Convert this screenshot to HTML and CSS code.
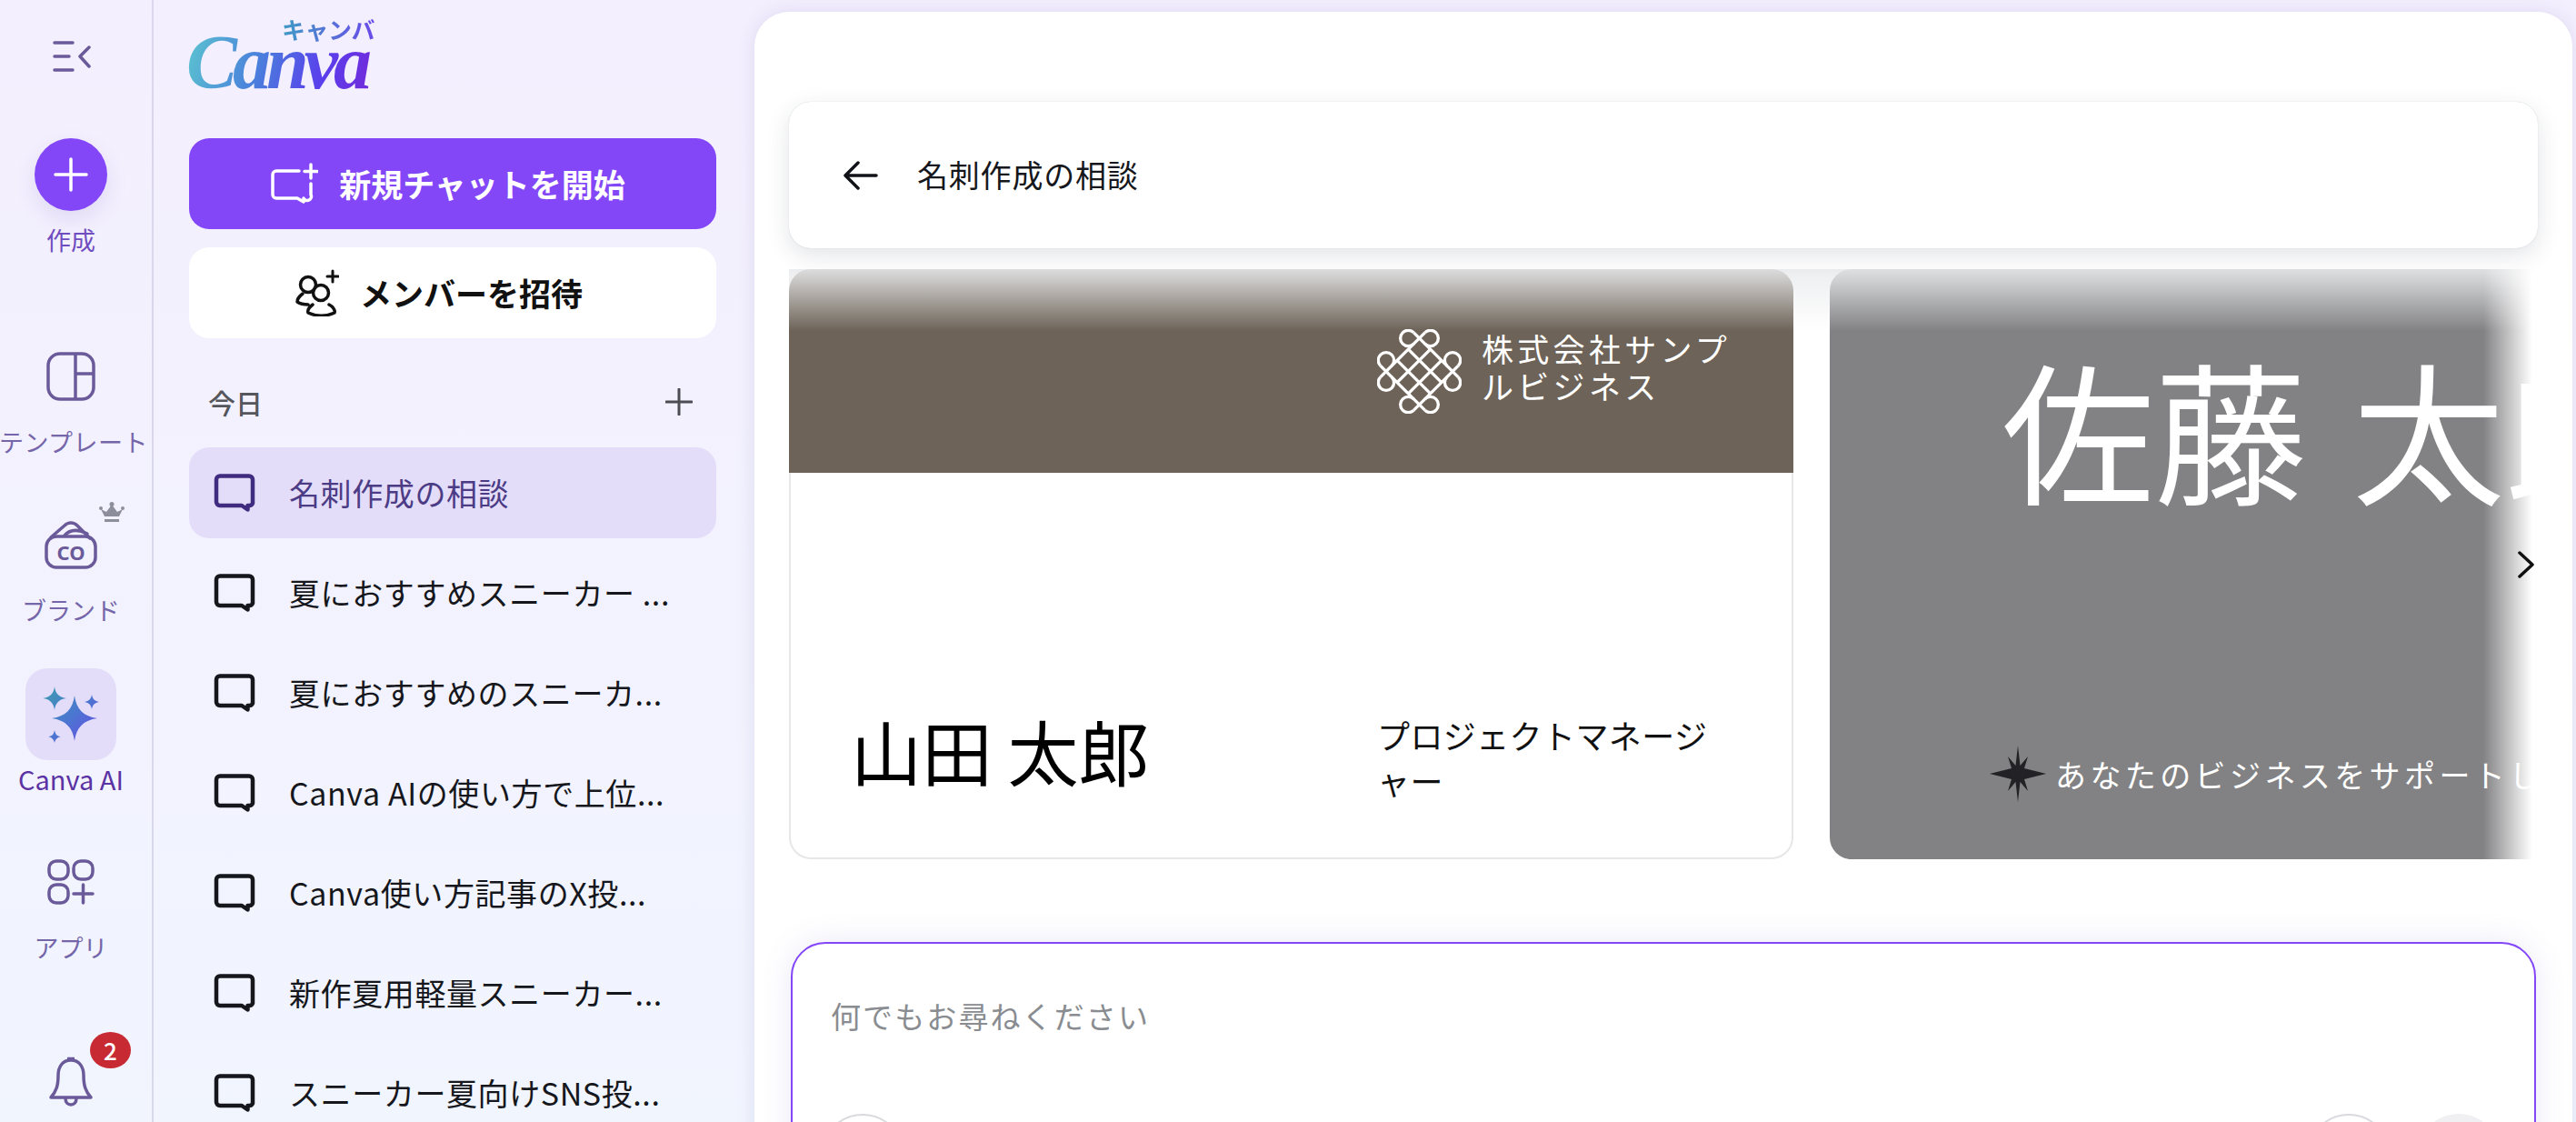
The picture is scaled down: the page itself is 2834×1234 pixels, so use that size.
FILE: index.html
```html
<!DOCTYPE html>
<html lang="ja">
  <head>
    <meta charset="utf-8" />
    <meta name="viewport" content="width=device-width, initial-scale=1" />
    <title>Canva AI</title>
    <link rel="stylesheet" href="styles.css">
  </head>
  <body>
    <svg class="defs" width="0" height="0" aria-hidden="true">
      <defs>
        <symbol id="chat" viewBox="0 0 46 42">
          <path d="M7 2.500h32a4 4 0 0 1 4 4v26a4 4 0 0 1-4 2.500h-1.500v4.500l-6.500-4.500H7a4 4 0 0 1-4-4V6.500a4 4 0 0 1 4-4z" fill="none" stroke="currentColor" stroke-width="4.500" stroke-linejoin="round" />
        </symbol>
        <linearGradient id="sparkle" x1="0" y1="0" x2="1" y2="1">
          <stop offset="0" stop-color="#3f9bb0" />
          <stop offset="0.5" stop-color="#4a78cf" />
          <stop offset="1" stop-color="#6a4ae8" />
        </linearGradient>
      </defs>
    </svg>

    <div class="app">
      <nav class="rail">
        <svg class="rail-toggle" viewBox="0 0 42 34" fill="none" stroke="#6b5a9a" stroke-width="3.500" stroke-linecap="round" stroke-linejoin="round">
          <path d="M2 2h20M2 17h16M2 32h20M40 7 30 17l10 11" />
        </svg>

        <button class="create-btn" type="button">
          <svg viewBox="0 0 40 40" fill="none" stroke="#fff" stroke-width="3.500" stroke-linecap="round"><path d="M20 3v34M3 20h34" /></svg>
        </button>
        <span class="rail-label create-label">作成</span>

        <svg class="rail-icon icon-template" viewBox="0 0 54 54" fill="none" stroke="#6a5a9a" stroke-width="3.500">
          <rect x="2" y="2" width="50" height="50" rx="13" />
          <path d="M32 2v50M32 24h20" />
        </svg>
        <span class="rail-label template-label">テンプレート</span>

        <div class="brand-icon">
          <svg class="rail-icon" viewBox="0 0 58 54" fill="none" stroke="#6a5a9a" stroke-width="3.500" stroke-linecap="round" stroke-linejoin="round">
            <rect x="2" y="18" width="54" height="34" rx="11" />
            <path d="M7 19 22 6c4-4 10-4 14 0l14 14M22 17c6-7 15-7 25-2" />
            <text class="brand-co" x="29" y="44" text-anchor="middle">CO</text>
          </svg>
          <svg class="crown" viewBox="0 0 28 24" fill="#8c8e9b">
            <path d="M6 16 2 8l6 3 6-8 6 8 6-3-4 8z" />
            <circle cx="14" cy="2.500" r="2.500" />
            <circle cx="2" cy="7" r="2" />
            <circle cx="26" cy="7" r="2" />
            <rect x="6" y="19" width="16" height="3" />
          </svg>
        </div>
        <span class="rail-label brand-label">ブランド</span>

        <div class="ai-tile">
          <svg viewBox="0 0 66 62">
            <path fill="url(#sparkle)" d="M15 0c1 8 5 12 13 13-8 1-12 5-13 13-1-8-5-12-13-13 8-1 12-5 13-13zM56 9c1 5 3 7 8 8-5 1-7 3-8 8-1-5-3-7-8-8 5-1 7-3 8-8zM37 10c2 15 10 23 25 25-15 2-23 10-25 25-2-15-10-23-25-25 15-2 23-10 25-25zM15 48c1 5 3 7 7 7-4 1-6 3-7 7-1-4-3-6-7-7 4 0 6-2 7-7z" />
          </svg>
        </div>
        <span class="rail-label ai-label">Canva AI</span>

        <svg class="rail-icon icon-apps" viewBox="0 0 52 50" fill="none" stroke="#6a5a9a" stroke-width="3.500" stroke-linecap="round">
          <rect x="2" y="2" width="21" height="20" rx="8" />
          <rect x="29" y="2" width="21" height="20" rx="8" />
          <rect x="2" y="28" width="21" height="20" rx="8" />
          <path d="M39.500 28v20M29 38h21" />
        </svg>
        <span class="rail-label apps-label">アプリ</span>

        <div class="bell">
          <svg viewBox="0 0 50 56" fill="none" stroke="#6a5a9a" stroke-width="3.500" stroke-linejoin="round">
            <path d="M25 5c-9 0-14 7-14 17 0 11-2 17-8 24h44c-6-7-8-13-8-24 0-10-5-17-14-17z" />
            <path d="M21 3.500h8M19 47c0 5 3 7 6 7s6-2 6-7" />
          </svg>
          <span class="badge">2</span>
        </div>
      </nav>

      <aside class="panel">
        <div class="logo">
          <span class="logo-kana">キャンバ</span>
          <span class="logo-word">Canva</span>
        </div>

        <button class="btn btn-primary" type="button">
          <svg viewBox="0 0 52 46" fill="none" stroke="#fff" stroke-width="3.500" stroke-linecap="round" stroke-linejoin="round">
            <path d="M31 9H6a4 4 0 0 0-4 4v22a4 4 0 0 0 4 4h23l7 4v-4a4 4 0 0 0 8-4V23" />
            <path d="M44 2v15M37 9.500h14" />
          </svg>
          新規チャットを開始
        </button>
        <button class="btn btn-white" type="button">
          <svg viewBox="0 0 48 52" fill="none" stroke="#111" stroke-width="3.500" stroke-linecap="round" stroke-linejoin="round">
            <circle cx="14" cy="17" r="8.500" />
            <circle cx="28" cy="26" r="8.500" />
            <path d="M8 27C4 30 2 33 2 36c3 2 7 3 12 3M19 39c-4 3-6 6-5 9 9 4 20 4 29 0 1-3-2-7-6-9" />
            <path d="M41 2v12M35 8h12" stroke-width="3" />
          </svg>
          メンバーを招待
        </button>

        <div class="section-head">
          <span>今日</span>
          <svg viewBox="0 0 30 30" fill="none" stroke="#4c4d52" stroke-width="3" stroke-linecap="round"><path d="M15 1v28M1 15h28" /></svg>
        </div>

        <ul class="chat-list">
          <li class="chat-item active"><svg class="chat-icon"><use href="#chat" /></svg><span>名刺作成の相談</span></li>
          <li class="chat-item"><svg class="chat-icon"><use href="#chat" /></svg><span>夏におすすめスニーカー ...</span></li>
          <li class="chat-item"><svg class="chat-icon"><use href="#chat" /></svg><span>夏におすすめのスニーカ...</span></li>
          <li class="chat-item"><svg class="chat-icon"><use href="#chat" /></svg><span>Canva AIの使い方で上位...</span></li>
          <li class="chat-item"><svg class="chat-icon"><use href="#chat" /></svg><span>Canva使い方記事のX投...</span></li>
          <li class="chat-item"><svg class="chat-icon"><use href="#chat" /></svg><span>新作夏用軽量スニーカー...</span></li>
          <li class="chat-item"><svg class="chat-icon"><use href="#chat" /></svg><span>スニーカー夏向けSNS投...</span></li>
        </ul>
      </aside>

      <main class="main">
        <header class="topbar">
          <svg viewBox="0 0 38 32" fill="none" stroke="#111318" stroke-width="3.500" stroke-linecap="round" stroke-linejoin="round"><path d="M36 16H3M16 2 2 16l14 14" /></svg>
          <span>名刺作成の相談</span>
        </header>

        <section class="carousel">
          <article class="card card-light">
            <div class="card-band">
              <svg class="knot" viewBox="-140 -140 280 280" fill="none" stroke="#fff" stroke-width="10">
                <path d="M-18.400 -128.400 128.400 18.400M-128.400 -18.400 18.400 128.400M128.400 -18.400 -18.400 128.400M18.400 -128.400 -128.400 18.400" />
                <path d="M-36.500 -73.500 73.500 36.500M-73.500 -36.500 36.500 73.500M73.500 -36.500 -36.500 73.500M36.500 -73.500 -73.500 36.500" />
                <path d="M18.400 -128.400A26 26 0 1 1 18.400 -91.600M-18.400 -128.400A26 26 0 1 0 -18.400 -91.600M18.400 128.400A26 26 0 1 0 18.400 91.600M-18.400 128.400A26 26 0 1 1 -18.400 91.600" />
                <path d="M128.400 -18.400A26 26 0 1 0 91.600 -18.400M128.400 18.400A26 26 0 1 1 91.600 18.400M-128.400 -18.400A26 26 0 1 1 -91.600 -18.400M-128.400 18.400A26 26 0 1 0 -91.600 18.400" />
              </svg>
              <p class="company">株式会社サンプルビジネス</p>
            </div>
            <div class="card-body">
              <p class="person">山田 太郎</p>
              <p class="job">プロジェクトマネージャー</p>
            </div>
          </article>

          <article class="card card-dark">
            <p class="big-name">佐藤 太郎</p>
            <div class="tagline">
              <svg viewBox="0 0 62 62" fill="#222226"><path d="M31 0 33.500 22 42 12 38 25 62 31 38 37 42 50 33.500 40 31 62 28.500 40 20 50 24 37 0 31 24 25 20 12 28.500 22z" /></svg>
              <span>あなたのビジネスをサポートします</span>
            </div>
          </article>

          <div class="fade-top"></div>
          <div class="fade-right"></div>
          <svg class="next" viewBox="0 0 18 30" fill="none" stroke="#111" stroke-width="3.500" stroke-linecap="round" stroke-linejoin="round"><path d="M2 2l14 13L2 28" /></svg>
        </section>

        <section class="composer">
          <p class="placeholder">何でもお尋ねください</p>
          <div class="composer-tools">
            <span class="tool tool-line"></span>
            <span class="tool-gap"></span>
            <span class="tool tool-line"></span>
            <span class="tool tool-fill"></span>
          </div>
        </section>
      </main>
    </div>
  </body>
</html>
```

FILE: styles.css
```css
* {
  box-sizing: border-box;
}
html,
body {
  margin: 0;
  height: 100%;
  overflow: hidden;
}
body {
  font-family: "Noto Sans CJK JP", "Noto Sans", sans-serif;
  color: #15171c;
  background: linear-gradient(180deg, #f4effe 0%, #f1f5fe 100%);
}
p,
ul {
  margin: 0;
  padding: 0;
}
.defs {
  display: block;
  height: 0;
}
.app {
  display: flex;
  height: 1234px;
  overflow: hidden;
}

/* left rail */
.rail {
  width: 169px;
  flex: none;
  border-right: 2px solid #d9d7ec;
  display: flex;
  flex-direction: column;
  align-items: center;
  padding: 45px 11px 0 0;
}
.rail-toggle {
  width: 42px;
  height: 34px;
  margin-left: 2px;
  flex: none;
}
.create-btn {
  width: 80px;
  height: 80px;
  flex: none;
  margin-top: 73px;
  padding: 0;
  border: none;
  border-radius: 50%;
  background: #8347f8;
  box-shadow: 0 10px 24px rgba(90, 60, 170, 0.12);
  display: flex;
  align-items: center;
  justify-content: center;
}
.create-btn svg {
  width: 40px;
  height: 40px;
}
.rail-label {
  font-size: 27px;
  line-height: 36px;
  white-space: nowrap;
  color: #7566aa;
}
.create-label {
  margin-top: 14px;
  color: #6f4cc0;
}
.rail-icon {
  display: block;
  flex: none;
}
.icon-template {
  width: 54px;
  height: 54px;
  margin-top: 105px;
}
.template-label {
  margin: 27px 0 0 6px;
  letter-spacing: 0.500px;
}
.brand-icon {
  position: relative;
  width: 58px;
  height: 54px;
  margin-top: 68px;
  flex: none;
}
.brand-icon .rail-icon {
  width: 58px;
  height: 54px;
}
.brand-co {
  font-family: "Noto Sans", sans-serif;
  font-size: 22px;
  font-weight: 700;
  fill: #6a5a9a;
  stroke: none;
}
.crown {
  position: absolute;
  left: 60px;
  top: -20px;
  width: 28px;
  height: 24px;
}
.brand-label {
  margin-top: 27px;
}
.ai-tile {
  width: 100px;
  height: 101px;
  flex: none;
  margin-top: 46px;
  border-radius: 24px;
  background: #e4ddf9;
  display: flex;
  align-items: center;
  justify-content: center;
}
.ai-tile svg {
  width: 66px;
  height: 62px;
}
.ai-label {
  margin-top: 2px;
  font-size: 29px;
  color: #5a32a3;
}
.icon-apps {
  width: 52px;
  height: 50px;
  margin-top: 71px;
}
.apps-label {
  margin-top: 29px;
}
.bell {
  position: relative;
  width: 50px;
  height: 56px;
  flex: none;
  margin-top: 101px;
}
.bell svg {
  display: block;
  width: 50px;
  height: 56px;
}
.badge {
  position: absolute;
  left: 46px;
  top: -26px;
  width: 45px;
  height: 40px;
  border-radius: 50%;
  background: #c82a33;
  color: #fff;
  font-size: 26px;
  font-weight: 500;
  line-height: 40px;
  text-align: center;
}

/* chat panel */
.panel {
  width: 661px;
  flex: none;
  padding: 22px 42px 0 39px;
}
.logo {
  position: relative;
  height: 130px;
}
.logo-kana {
  position: absolute;
  left: 102px;
  top: -5px;
  font-size: 26px;
  line-height: 30px;
  font-weight: 700;
  letter-spacing: -0.500px;
  background: linear-gradient(90deg, #3f9bc6, #6a4ae8);
  -webkit-background-clip: text;
  background-clip: text;
  color: transparent;
}
.logo-word {
  position: absolute;
  left: -7px;
  top: 18px;
  padding: 0 10px 0 4px;
  font-family: "Liberation Serif", serif;
  font-size: 84px;
  line-height: 58px;
  font-style: italic;
  font-weight: 700;
  letter-spacing: -5px;
  background: linear-gradient(105deg, #5cc8cf 0%, #4a7fdc 40%, #5a3fec 72%, #7528d8 100%);
  -webkit-background-clip: text;
  background-clip: text;
  color: transparent;
}
.btn {
  width: 100%;
  height: 100px;
  padding: 0 0 2px;
  border: none;
  border-radius: 22px;
  font-family: inherit;
  font-size: 35px;
  font-weight: 700;
  display: flex;
  align-items: center;
  justify-content: center;
  gap: 23px;
}
.btn svg {
  margin-top: 2px;
}
.btn-primary {
  padding-right: 10px;
  background: #8347f8;
  color: #fff;
}
.btn-primary svg {
  width: 52px;
  height: 46px;
}
.btn-white {
  margin-top: 20px;
  padding-right: 30px;
  background: #fff;
  color: #111;
}
.btn-white svg {
  width: 48px;
  height: 52px;
}
.section-head {
  height: 100px;
  margin-top: 21px;
  padding: 0 26px 2px 21px;
  display: flex;
  align-items: center;
  justify-content: space-between;
  font-size: 30px;
  font-weight: 500;
  color: #55565c;
}
.section-head svg {
  width: 30px;
  height: 30px;
}
.chat-list {
  list-style: none;
  margin-top: -1px;
  display: flex;
  flex-direction: column;
  gap: 10px;
}
.chat-item {
  height: 100px;
  flex: none;
  padding-left: 27px;
  border-radius: 22px;
  display: flex;
  align-items: center;
  gap: 37px;
  font-size: 34px;
  letter-spacing: 0.600px;
  white-space: nowrap;
}
.chat-item span {
  margin-top: -2px;
}
.chat-icon {
  width: 46px;
  height: 42px;
  flex: none;
}
.chat-item.active {
  background: #e4ddf9;
  color: #4c3b85;
}
.chat-item.active .chat-icon {
  color: #3f2b80;
}

/* main column */
.main {
  flex: none;
  width: 2000px;
  height: 1300px;
  margin-top: 13px;
  padding: 99px 42px 0 38px;
  border-radius: 38px 38px 0 0;
  background: #fff;
  box-shadow: 0 0 20px rgba(70, 55, 150, 0.12);
}
.topbar {
  position: relative;
  z-index: 2;
  height: 161px;
  margin-right: -4px;
  padding-left: 60px;
  border-radius: 24px;
  background: #fff;
  box-shadow: 0 0 1px rgba(40, 50, 70, 0.25), 0 8px 26px rgba(40, 50, 70, 0.13);
  display: flex;
  align-items: center;
  gap: 43px;
  font-size: 34px;
  letter-spacing: 0.800px;
}
.topbar span {
  margin-top: -2px;
}
.topbar svg {
  width: 38px;
  height: 32px;
}
.carousel {
  position: relative;
  height: 649px;
  margin-top: 23px;
  display: flex;
  gap: 40px;
  overflow: hidden;
}
.card {
  flex: none;
  width: 1105px;
  height: 649px;
  border-radius: 24px;
  overflow: hidden;
}
.card-light {
  background: #fff;
  box-shadow: inset 0 0 0 2px #e6e7e9;
}
.card-band {
  height: 224px;
  padding-left: 647px;
  background: #6d6358;
  display: flex;
  align-items: center;
  gap: 22px;
}
.knot {
  width: 93px;
  height: 93px;
  flex: none;
}
.company {
  width: 290px;
  margin-top: -10px;
  color: #fff;
  font-size: 35px;
  line-height: 41px;
  letter-spacing: 4.300px;
}
.card-body {
  height: 425px;
  padding: 250px 50px 0 68px;
  display: flex;
  align-items: flex-start;
}
.person {
  width: 579px;
  flex: none;
  color: #000;
  font-size: 78px;
  line-height: 110px;
  word-spacing: -1px;
}
.job {
  width: 370px;
  margin-top: 13px;
  color: #111;
  font-size: 36px;
  line-height: 50px;
  letter-spacing: 0.400px;
}
.card-dark {
  width: 1105px;
  padding: 79px 0 0 192px;
  background: #828284;
  color: #fff;
}
.big-name {
  margin-left: -3px;
  font-size: 168px;
  line-height: 190px;
  white-space: nowrap;
  word-spacing: 12px;
}
.tagline {
  margin-top: 255px;
  display: flex;
  align-items: center;
  gap: 10px;
  white-space: nowrap;
  font-size: 34px;
  letter-spacing: 4.400px;
}
.tagline svg {
  width: 62px;
  height: 62px;
  flex: none;
  margin-left: -16px;
}
.fade-top {
  position: absolute;
  left: 0;
  right: 0;
  top: 0;
  height: 68px;
  background: linear-gradient(180deg, rgba(235, 236, 238, 0.9), rgba(255, 255, 255, 0));
}
.fade-right {
  position: absolute;
  right: 0;
  top: 0;
  bottom: 0;
  width: 56px;
  background: linear-gradient(90deg, rgba(255, 255, 255, 0), #fff 96%);
}
.next {
  position: absolute;
  right: 0;
  top: 310px;
  width: 18px;
  height: 30px;
}
.composer {
  height: 400px;
  margin: 91px -2px 0 2px;
  padding: 57px 37px 0 42px;
  border: 2px solid #8347f8;
  border-radius: 38px;
  background: #fff;
  box-shadow: 0 0 34px rgba(110, 90, 200, 0.14);
}
.placeholder {
  font-size: 33px;
  line-height: 44px;
  letter-spacing: 2.100px;
  color: #898c90;
}
.composer-tools {
  margin: 86px 0 0 -11px;
  display: flex;
  align-items: flex-start;
}
.tool {
  width: 92px;
  height: 92px;
  flex: none;
  border-radius: 50%;
}
.tool-line {
  border: 2px solid #d9dade;
}
.tool-fill {
  margin-left: 29px;
  background: #f0f0f3;
}
.tool-gap {
  flex: 1;
}
```
